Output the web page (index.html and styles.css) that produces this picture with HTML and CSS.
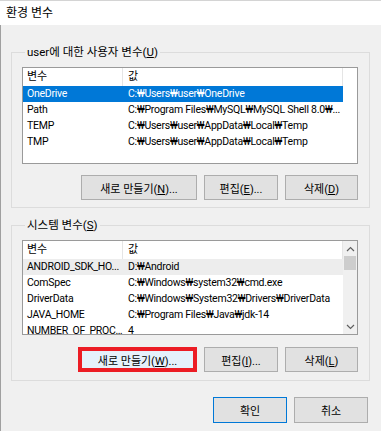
FILE: index.html
```html
<!DOCTYPE html>
<html lang="ko">
<head>
  <meta charset="UTF-8">
  <title>환경 변수</title>
  <link rel="stylesheet" href="styles.css">
</head>
<body>
  <div class="titlebar">환경 변수</div>
  <div class="content">
    <!-- 사용자 변수 -->
    <div class="group">
      <div class="group-title">user에 대한 사용자 변수(<u>U</u>)</div>
      <div class="list list-user">
        <div class="list-body">
          <div class="row head"><span class="c1">변수</span><span class="c2">값</span></div>
          <div class="row selected"><span class="c1">OneDrive</span><span class="c2">C:₩Users₩user₩OneDrive</span></div>
          <div class="row"><span class="c1">Path</span><span class="c2">C:₩Program Files₩MySQL₩MySQL Shell 8.0₩...</span></div>
          <div class="row"><span class="c1">TEMP</span><span class="c2">C:₩Users₩user₩AppData₩Local₩Temp</span></div>
          <div class="row"><span class="c1">TMP</span><span class="c2">C:₩Users₩user₩AppData₩Local₩Temp</span></div>
        </div>
      </div>
      <div class="buttons">
        <button class="btn btn-new">새로 만들기(<u>N</u>)...</button>
        <button class="btn btn-edit">편집(<u>E</u>)...</button>
        <button class="btn btn-del">삭제(<u>D</u>)</button>
      </div>
    </div>

    <!-- 시스템 변수 -->
    <div class="group group-system">
      <div class="group-title">시스템 변수(<u>S</u>)</div>
      <div class="list list-system">
        <div class="list-body">
          <div class="row head"><span class="c1">변수</span><span class="c2">값</span></div>
          <div class="row inactive"><span class="c1">ANDROID_SDK_HO...</span><span class="c2">D:₩Android</span></div>
          <div class="row"><span class="c1">ComSpec</span><span class="c2">C:₩Windows₩system32₩cmd.exe</span></div>
          <div class="row"><span class="c1">DriverData</span><span class="c2">C:₩Windows₩System32₩Drivers₩DriverData</span></div>
          <div class="row"><span class="c1">JAVA_HOME</span><span class="c2">C:₩Program Files₩Java₩jdk-14</span></div>
          <div class="row"><span class="c1">NUMBER_OF_PROC...</span><span class="c2">4</span></div>
        </div>
        <div class="scrollbar">
          <div class="arrow">
            <svg width="9" height="6" viewBox="0 0 9 6"><path d="M1 5 L4.5 1.5 L8 5" fill="none" stroke="#606060" stroke-width="1.2"/></svg>
          </div>
          <div class="thumb"></div>
          <div class="track"></div>
          <div class="arrow">
            <svg width="9" height="6" viewBox="0 0 9 6"><path d="M1 1 L4.5 4.5 L8 1" fill="none" stroke="#606060" stroke-width="1.2"/></svg>
          </div>
        </div>
      </div>
      <div class="buttons">
        <button class="btn btn-new marked">새로 만들기(<u>W</u>)...</button>
        <button class="btn btn-edit">편집(<u>I</u>)...</button>
        <button class="btn btn-del">삭제(<u>L</u>)</button>
      </div>
    </div>

    <div class="dialog-buttons">
      <button class="btn btn-ok">확인</button>
      <button class="btn btn-cancel">취소</button>
    </div>
  </div>
</body>
</html>
```

FILE: styles.css
```css
* {
  box-sizing: border-box;
}
body {
  margin: 0;
  background: #f0f0f0;
  font-family: Roboto, "Noto Sans", "Noto Sans CJK KR", sans-serif;
  font-size: 11px;
  color: #000;
  overflow: hidden;
}
.titlebar {
  height: 25px;
  line-height: 24px;
  background: #fff;
  border-top: 1px solid #d4d4d4;
  padding-left: 6px;
  font-size: 12px;
}
.content {
  height: 406px;
  overflow: hidden;
  border-left: 1px solid #a0a0a0;
  padding: 0 11px 0 10px;
}
.group {
  margin-top: 27px;
  border: 1px solid #dcdcdc;
  padding: 0 11px 7px 10px;
}
.group-system {
  margin-top: 17px;
}
.group-title {
  width: fit-content;
  height: 16px;
  line-height: 16px;
  margin: -9px 0 0 3px;
  padding: 0 2px;
  background: #f0f0f0;
  font-size: 11.5px;
}
.list {
  margin-top: 7px;
  border: 1px solid #9a9a9a;
  background: #fff;
  overflow: hidden;
  display: flex;
}
.list-user {
  height: 97px;
}
.list-system {
  height: 95px;
}
.list-body {
  flex: 1;
}
.row {
  display: flex;
  width: 320px;
  height: 16px;
  line-height: 16px;
  white-space: nowrap;
  font-size: 10.5px;
  letter-spacing: -0.25px;
}
.row.head {
  height: 18px;
  line-height: 18px;
  font-size: 11px;
  letter-spacing: 0;
}
.c1, .c2 {
  overflow: hidden;
  text-overflow: ellipsis;
}
.c1 {
  width: 100px;
  padding-left: 4px;
}
.c2 {
  width: 220px;
  padding-left: 5px;
}
.head .c1, .head .c2 {
  border-right: 1px solid #e5e5e5;
}
.selected {
  background: #0078d7;
  color: #fff;
}
.inactive {
  background: #ededed;
}
.scrollbar {
  width: 14px;
  background: #f0f0f0;
  display: flex;
  flex-direction: column;
}
.arrow {
  height: 15px;
  display: flex;
  align-items: center;
  justify-content: center;
}
.thumb {
  height: 14px;
  margin: 0 1px;
  background: #cdcdcd;
}
.track {
  flex: 1;
}
.buttons {
  margin-top: 11px;
  display: flex;
  justify-content: flex-end;
  gap: 7px;
}
.group-system .buttons {
  margin-top: 12px;
  padding-bottom: 1px;
}
.btn {
  height: 25px;
  padding: 0;
  border: 1px solid #adadad;
  background: #e1e1e1;
  font-family: inherit;
  font-size: 11px;
  color: #000;
}
.btn-new {
  width: 116px;
}
.btn-edit {
  width: 74px;
}
.btn-del {
  width: 73px;
}
.btn.marked {
  width: 119px;
  border: 4px solid #ec1c24;
  background: #e5f1fb;
}
.dialog-buttons {
  margin-top: 16px;
  padding-right: 2px;
  display: flex;
  justify-content: flex-end;
  gap: 7px;
}
.btn-ok, .btn-cancel {
  width: 74px;
  height: 26px;
}
.btn-ok {
  border-color: #0078d7;
}
```
